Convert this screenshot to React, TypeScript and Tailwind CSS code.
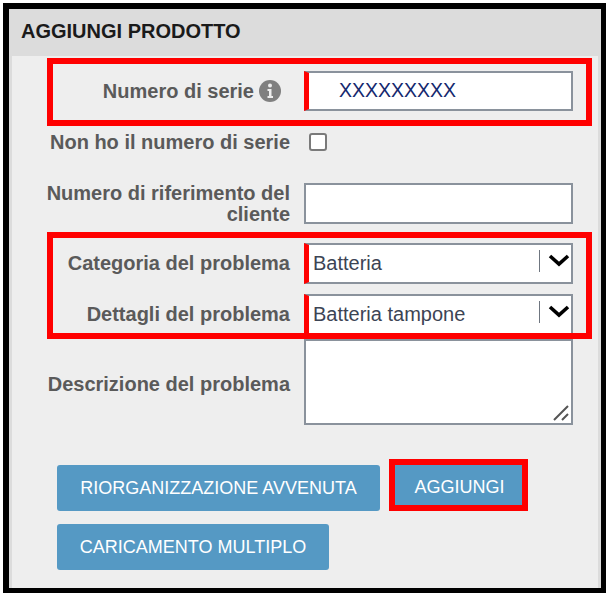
import React from "react";

function Chevron() {
  return (
    <svg width="22" height="14" viewBox="0 0 22 14" fill="none" className="block">
      <path d="M2 3 L11 11 L20 3" stroke="#000" strokeWidth="3.6" />
    </svg>
  );
}

function Label({ children, className = "" }: { children: React.ReactNode; className?: string }) {
  return (
    <div className={`w-[292px] shrink-0 pr-[14px] text-right text-[20px] leading-[21px] font-bold text-[#5a5a5a] ${className}`}>
      {children}
    </div>
  );
}

function SelectBox({ value }: { value: string }) {
  return (
    <div className="flex h-[41px] w-[269px] items-center border-2 border-l-[5px] border-[#8a929c] border-l-[#ff0000] bg-white pl-[4px]">
      <span className="flex-1 pb-[2px] text-[20px] text-[#3c4454]">{value}</span>
      <span className="mb-[5px] h-[22px] w-[1px] bg-[#6f7680]" />
      <span className="mb-[7px] ml-[8px] mr-[1px]"><Chevron /></span>
    </div>
  );
}

function Btn({ children, className = "" }: { children: React.ReactNode; className?: string }) {
  return (
    <button className={`flex h-[46px] items-center justify-center rounded-[3px] bg-[#5599c4] text-[18px] text-white ${className}`}>
      {children}
    </button>
  );
}

export default function App() {
  return (
    <div className="h-[596px] w-[609px] bg-white pt-[3px] pl-[3px] font-['Liberation_Sans',sans-serif]">
      <div className="relative h-[590px] w-[603px] border-[6px] border-r-[5px] border-b-[5px] border-black bg-[#dcdcdc]">
        <div className="flex h-[47px] items-center pb-[3px] pl-[12px] text-[20px] font-bold text-[#1a1a1a]">AGGIUNGI PRODOTTO</div>
        <div className="mx-[3px] h-[532px] bg-[#eeeeee] pt-[15px]">
          <div className="flex h-[40px] items-center">
            <Label>
              <span className="mr-[-6px] inline-flex items-center justify-end gap-[5px] pr-[15px]">
                Numero di serie
                <svg width="22" height="22" viewBox="0 0 22 22">
                  <circle cx="11" cy="11" r="11" fill="#808080" />
                  <circle cx="11" cy="5.6" r="2" fill="#eee" />
                  <path d="M8.5 9h4v7h1.5v2H8.5v-2H10v-5H8.5z" fill="#eee" />
                </svg>
              </span>
            </Label>
            <div className="flex h-[40px] w-[269px] items-center border-2 border-l-[5px] border-[#8a929c] border-l-[#ff0000] bg-white pl-[30px] text-[19.5px] text-[#14286e]">
              XXXXXXXXX
            </div>
          </div>
          <div className="mt-[21px] flex h-[20px] items-center">
            <Label>Non ho il numero di serie</Label>
            <span className="ml-[5px] h-[18px] w-[18px] rounded-[3px] border-2 border-[#7a7a7a] bg-white" />
          </div>
          <div className="mt-[31px] flex h-[41px] items-start">
            <Label>Numero di riferimento del cliente</Label>
            <div className="h-[41px] w-[269px] border-2 border-[#8a929c] bg-white" />
          </div>
          <div className="mt-[19px] flex items-center">
            <Label>Categoria del problema</Label>
            <SelectBox value="Batteria" />
          </div>
          <div className="mt-[10px] flex items-center">
            <Label>Dettagli del problema</Label>
            <SelectBox value="Batteria tampone" />
          </div>
          <div className="mt-[4px] flex">
            <Label className="pt-[35px]">Descrizione del problema</Label>
            <div className="relative h-[86px] w-[269px] border-2 border-[#8a929c] bg-white">
              <svg width="20" height="20" viewBox="0 0 20 20" className="absolute right-0 bottom-0">
                <path d="M3 17 L17 3 M11 17 L17 11" stroke="#555" strokeWidth="2" />
              </svg>
            </div>
          </div>
          <div className="mt-[34px] ml-[45px] flex flex-wrap items-end gap-x-[9px] gap-y-[13px]">
            <Btn className="w-[323px]">RIORGANIZZAZIONE AVVENUTA</Btn>
            <Btn className="h-[52px] w-[139px] rounded-none border-[6px] border-[#ff0000] pt-[4px] pl-[2px]">AGGIUNGI</Btn>
            <Btn className="w-[272px]">CARICAMENTO MULTIPLO</Btn>
          </div>
        </div>
        <div className="absolute top-[49px] left-[38px] h-[68px] w-[545px] border-[6px] border-[#ff0000]" />
        <div className="absolute top-[223px] left-[38px] h-[107px] w-[545px] border-[6px] border-[#ff0000]" />
      </div>
    </div>
  );
}
